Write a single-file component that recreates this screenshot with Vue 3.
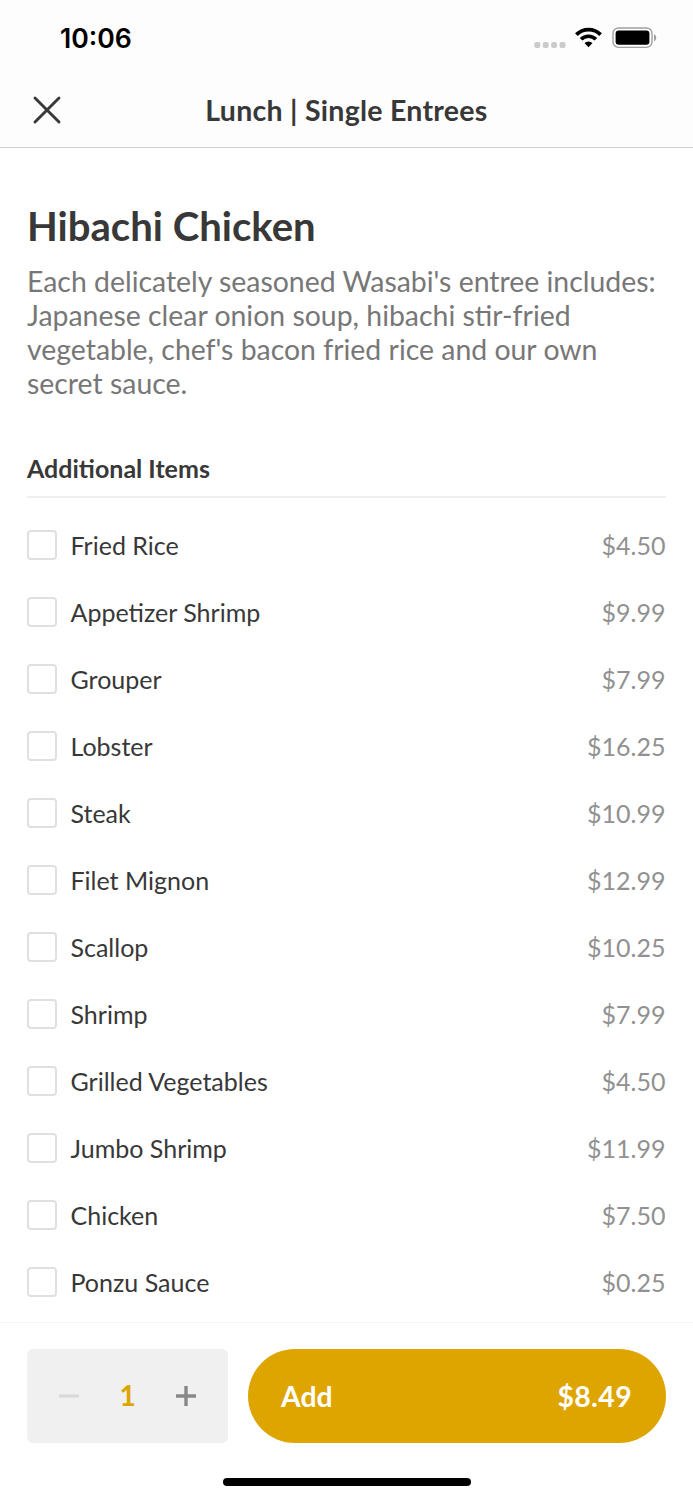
<script setup>
import { ref } from 'vue'

const items = [
    { id: 1, name: 'Fried Rice', price: 4.5 },
    { id: 2, name: 'Appetizer Shrimp', price: 9.99 },
    { id: 3, name: 'Grouper', price: 7.99 },
    { id: 4, name: 'Lobster', price: 16.25 },
    { id: 5, name: 'Steak', price: 10.99 },
    { id: 6, name: 'Filet Mignon', price: 12.99 },
    { id: 7, name: 'Scallop', price: 10.25 },
    { id: 8, name: 'Shrimp', price: 7.99 },
    { id: 9, name: 'Grilled Vegetables', price: 4.5 },
    { id: 10, name: 'Jumbo Shrimp', price: 11.99 },
    { id: 11, name: 'Chicken', price: 7.5 },
    { id: 12, name: 'Ponzu Sauce', price: 0.25 }
]

const quantity = ref(1)
const basePrice = 8.49

const currency = (n) => '$' + n.toFixed(2)
</script>

<template>
    <div class="screen">
        <header class="top">
            <div class="status">
                <span class="time">10:06</span>
                <div class="signals">
                    <svg width="32" height="6" viewBox="0 0 32 6" fill="#cbcbcb">
                        <rect v-for="n in 4" :key="n" :x="(n - 1) * 8.4 + 0.3" y="0" width="6" height="6" rx="2" />
                    </svg>
                    <svg class="wifi" width="27" height="21" viewBox="0 0 27 21">
                        <path d="M1.4 7.6a17 17 0 0 1 24.2 0" fill="none" stroke="#000" stroke-width="3.8" />
                        <path d="M6.1 12.3a10.5 10.5 0 0 1 14.8 0" fill="none" stroke="#000" stroke-width="3.7" />
                        <path d="M13.5 20.3l-4-4.2a6 6 0 0 1 8 0z" />
                    </svg>
                    <svg class="battery" width="45" height="22" viewBox="0 0 45 22">
                        <rect x="1" y="1" width="39" height="19.4" rx="5.5" fill="none" stroke="#a0a0a0" stroke-width="1.4" />
                        <rect x="3.6" y="3.6" width="33.8" height="14.2" rx="3" />
                        <path d="M42 7.3c3 1.3 3 5.7 0 7z" fill="#a0a0a0" />
                    </svg>
                </div>
            </div>
            <div class="nav">
                <svg class="close" width="30" height="30" viewBox="0 0 30 30">
                    <path d="M3 3l24 24M27 3L3 27" stroke="#383838" stroke-width="2.9" stroke-linecap="round" />
                </svg>
                <h1>Lunch | Single Entrees</h1>
            </div>
        </header>

        <main>
            <h2>Hibachi Chicken</h2>
            <p class="description">Each delicately seasoned Wasabi's entree includes:<br>Japanese clear onion soup, hibachi stir-fried<br>vegetable, chef's bacon fried rice and our own<br>secret sauce.</p>
            <h3>Additional Items</h3>
            <ul>
                <li v-for="item in items" :key="item.id">
                    <span class="checkbox"></span>
                    <span class="name">{{ item.name }}</span>
                    <span class="price">{{ currency(item.price) }}</span>
                </li>
            </ul>
        </main>

        <footer>
            <div class="actions">
                <div class="stepper">
                    <svg width="22" height="22" viewBox="0 0 22 22" @click="quantity = Math.max(1, quantity - 1)">
                        <path d="M1 11h20" stroke="#d9d9d9" stroke-width="3.2" />
                    </svg>
                    <span class="count">{{ quantity }}</span>
                    <svg width="22" height="22" viewBox="0 0 22 22" @click="quantity++">
                        <path d="M1 11h20M11 1v20" stroke="#888" stroke-width="3.4" />
                    </svg>
                </div>
                <button class="add">
                    <span>Add</span>
                    <span class="total">{{ currency(basePrice * quantity) }}</span>
                </button>
            </div>
            <div class="home-bar"></div>
        </footer>
    </div>
</template>

<style>
body {
    margin: 0;
    background: #fff;
}
</style>

<style scoped>
.screen {
    box-sizing: border-box;
    width: 693px;
    height: 1500px;
    overflow: hidden;
    display: flex;
    flex-direction: column;
    font-family: Lato, sans-serif;
    color: #383838;
    background: #fff;
}

.top {
    box-sizing: border-box;
    height: 148px;
    background: #fdfdfd;
    border-bottom: 1px solid #d0d0d0;
}

.status {
    display: flex;
    justify-content: space-between;
    height: 74px;
    padding: 0 36px 0 60px;
}

.time {
    margin-top: 22px;
    font: 600 26.6px/32px Inter, sans-serif;
    color: #000;
}

.signals {
    display: flex;
    align-items: flex-start;
    padding-top: 27px;
}

.signals svg:first-child {
    margin-top: 15px;
}

.wifi {
    margin-left: 9px;
}

.battery {
    margin-left: 10px;
}

.nav {
    display: grid;
    grid-template-columns: 1fr auto 1fr;
    align-items: center;
    height: 72px;
    padding: 0 32px;
}

h1 {
    margin: 0;
    font-size: 28.5px;
    line-height: 34px;
    font-weight: 700;
    letter-spacing: 0.27px;
}

main {
    flex: 1;
    padding: 54px 27px 0;
}

h2 {
    margin: 0;
    font-size: 40.1px;
    line-height: 48px;
    font-weight: 700;
}

.description {
    margin: 14px 0 0;
    font-size: 28.42px;
    line-height: 34.1px;
    color: #777;
    white-space: nowrap;
}

h3 {
    margin: 51.6px 0 0;
    padding-bottom: 12px;
    border-bottom: 2px solid #efefef;
    font-size: 25px;
    line-height: 32px;
    font-weight: 700;
}

ul {
    margin: 13.5px 0 0;
    padding: 0;
    list-style: none;
}

li {
    display: flex;
    align-items: center;
    height: 67px;
    font-size: 25.03px;
}

.checkbox {
    box-sizing: border-box;
    width: 30px;
    height: 30px;
    margin-right: 13.5px;
    border: 2px solid #e0e0e0;
    border-radius: 4px;
}

.price {
    margin-left: auto;
    padding-right: 0.5px;
    color: #919191;
}

footer {
    box-sizing: border-box;
    height: 178px;
    padding: 26px 27px 0;
    border-top: 1px solid #f4f4f4;
    background: #fff;
}

.actions {
    display: flex;
    gap: 20px;
}

.stepper {
    box-sizing: border-box;
    display: flex;
    align-items: center;
    justify-content: space-between;
    width: 201px;
    height: 94px;
    padding: 0 31px;
    border-radius: 6px;
    background: #f0f0f0;
    font-size: 28px;
    line-height: 34px;
    font-weight: 700;
    color: #dea500;
}

.count {
    padding-bottom: 2px;
}

.add {
    flex: 1;
    display: flex;
    align-items: center;
    justify-content: space-between;
    height: 94px;
    padding: 0 34px 0 33px;
    border: 0;
    border-radius: 47px;
    background: #dea500;
    font: 700 28.4px/34px Lato, sans-serif;
    color: #fff;
}

.total {
    letter-spacing: 0.4px;
}

.home-bar {
    width: 248px;
    height: 8px;
    margin: 35px auto 0;
    border-radius: 4px;
    background: #000;
}
</style>
